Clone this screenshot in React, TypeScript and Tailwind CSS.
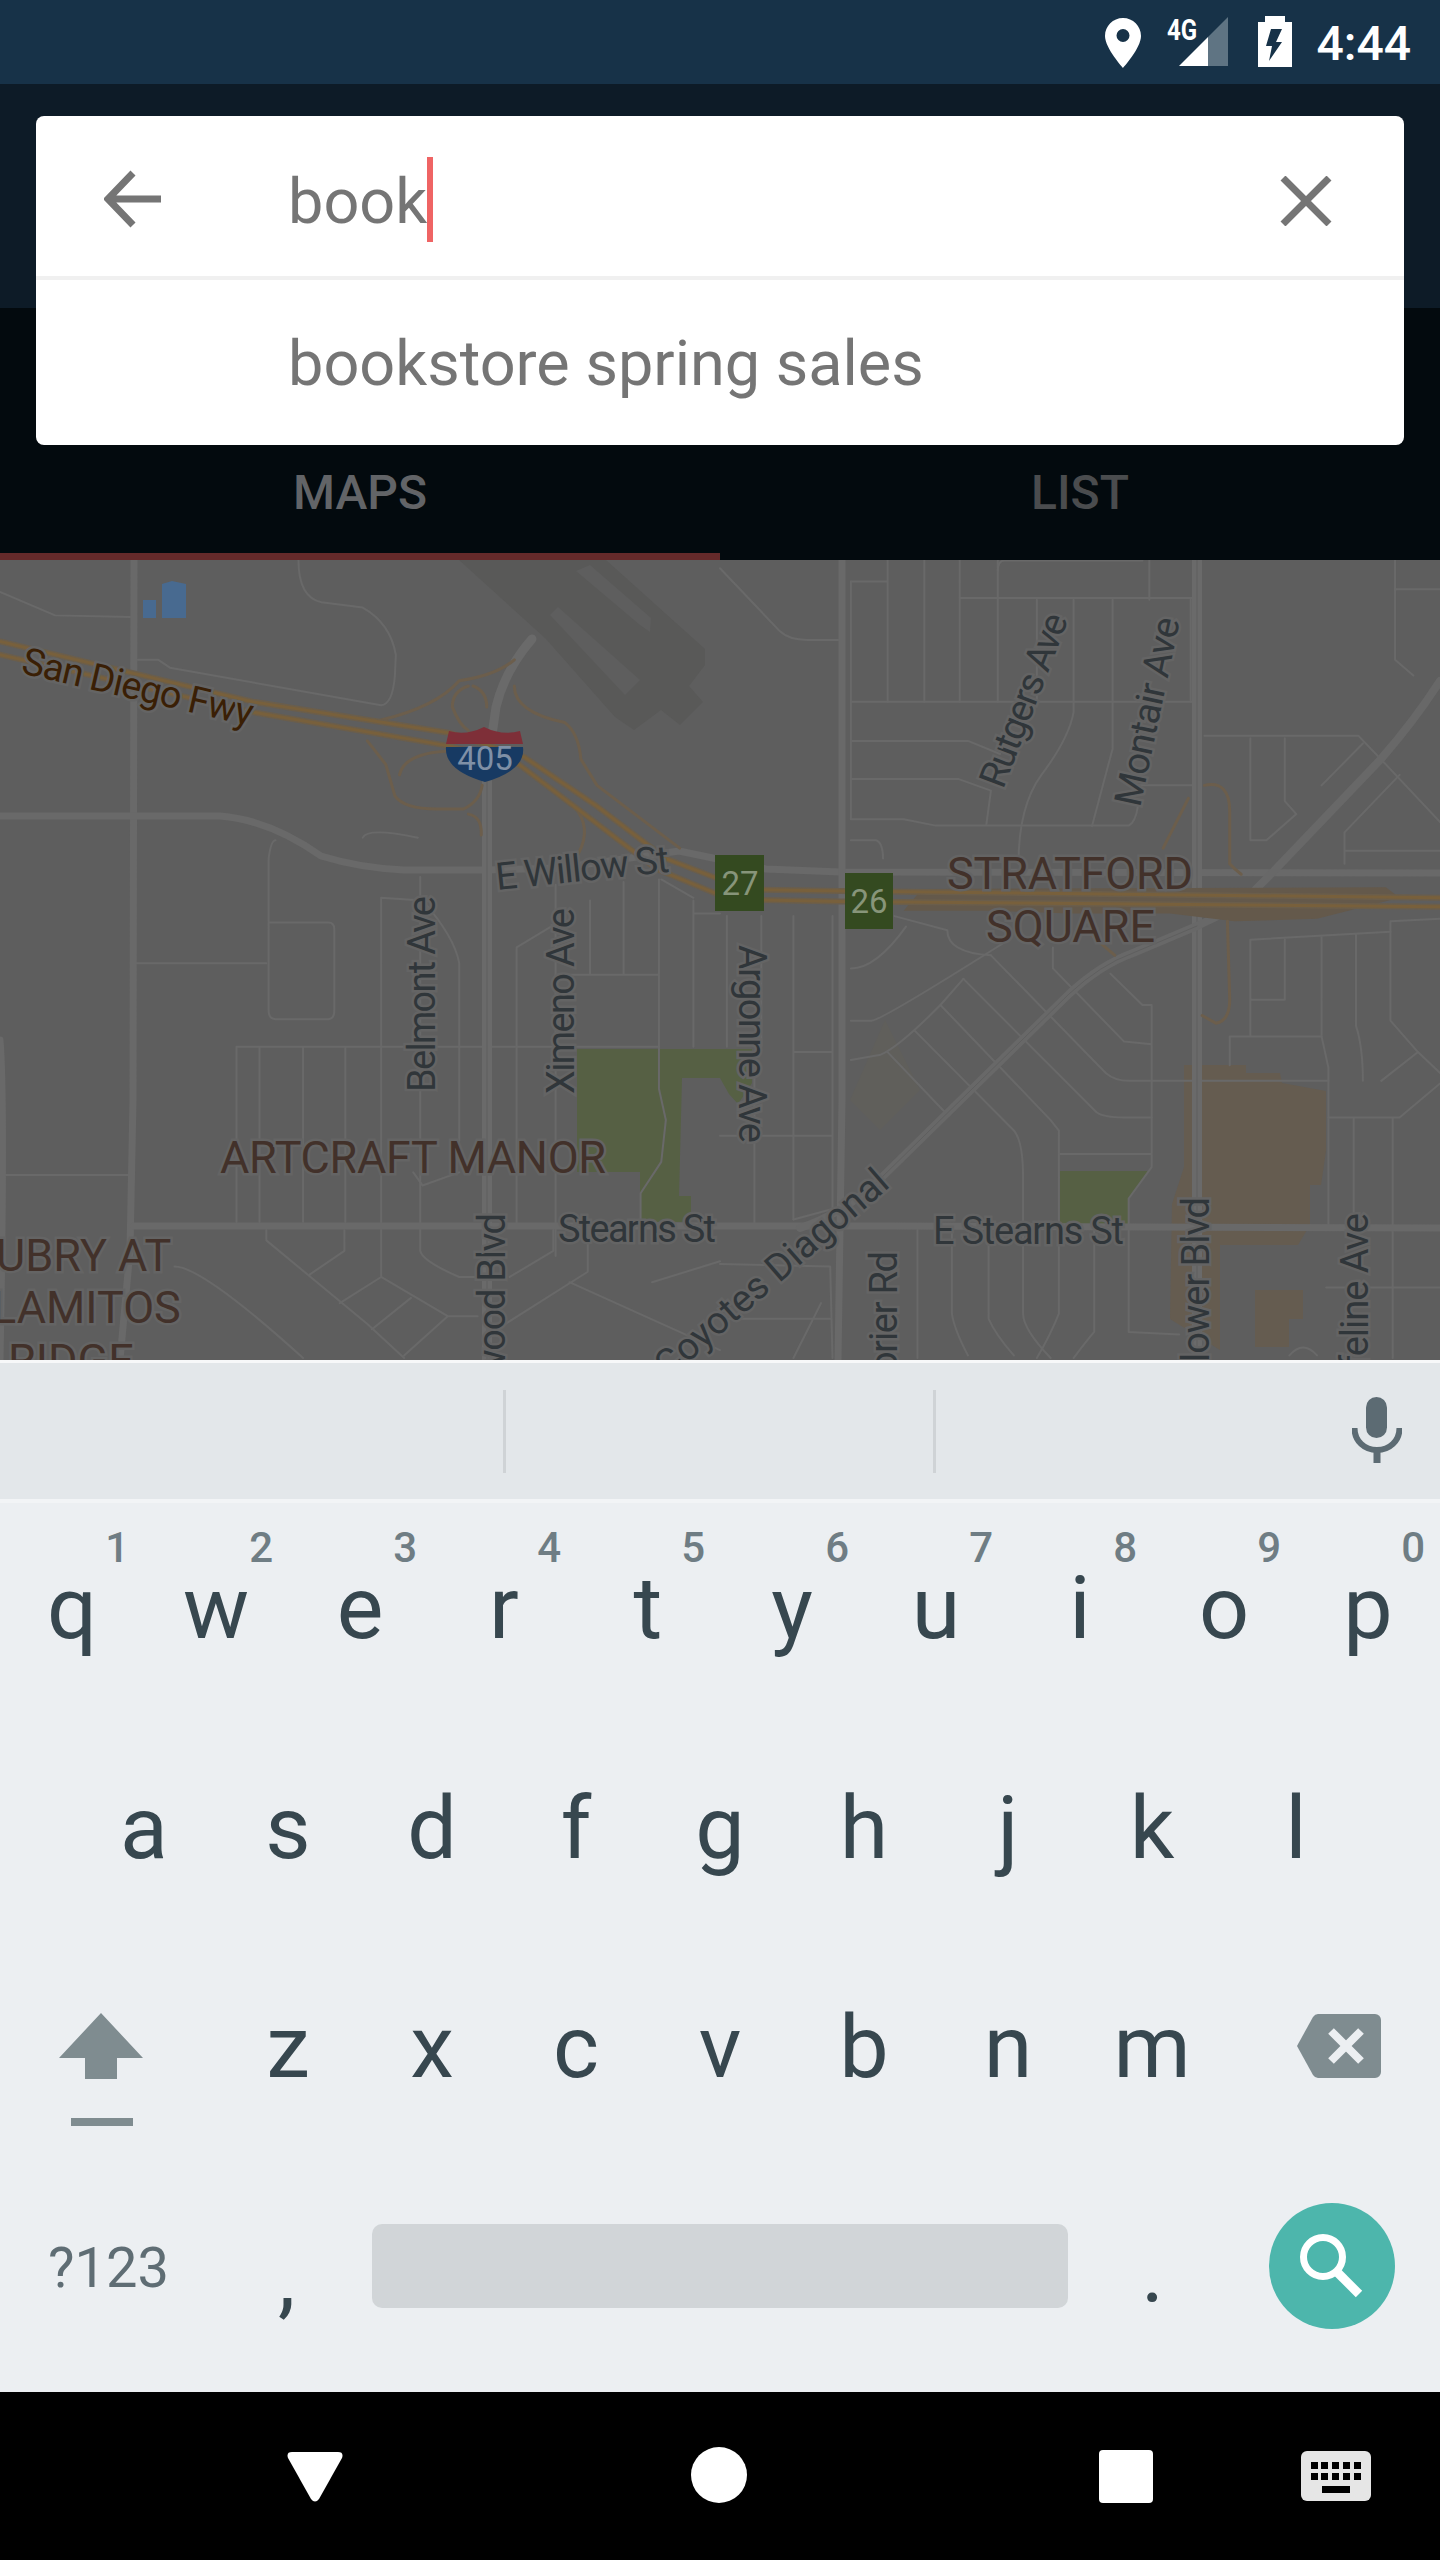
import React from "react";

const Lines = ({ ds, c, w }: { ds: string[]; c: string; w: number }) => (
  <>
    {ds.map((d, i) => (
      <path key={i} d={d} fill="none" stroke={c} strokeWidth={w} vectorEffect="non-scaling-stroke" strokeLinejoin="round" strokeLinecap="round" />
    ))}
  </>
);

const leftThin = [
  "M0 80 L120 125 L285 128",
  "M300 210 L345 210 L370 225 L830 297 Q855 295 860 240 L862 200 Q850 140 790 110 L700 100 Q650 90 650 20",
  "M298 790 L580 790",
  "M585 590 Q590 555 600 555 M585 590 L585 880 Q585 897 600 897 L715 897 Q728 897 728 880 L728 725 Q728 712 715 712 L585 712",
  "M915 625 L915 1340 Q920 1360 1000 1390 L1040 1390",
  "M830 665 L830 1390 M830 665 L920 670 Q990 740 1000 790 L1000 1130",
  "M515 950 L1435 950 M515 950 L515 1285 M565 950 L565 1285 M660 950 L660 1285 M752 950 L752 1285",
  "M1125 1290 L1125 760 L1210 715 M1210 640 L1210 1350",
  "M1285 670 L1285 812 M1358 635 L1358 812 M1210 812 L1435 812 M1435 630 L1435 1030 L1450 1090 L1440 1170 L1395 1230 L1395 1285 M1510 670 L1510 950 M1510 695 L1568 695 M1440 630 L1510 665",
  "M0 1195 L285 1195",
  "M580 1300 L580 1320 L800 1480 L880 1545 M750 1300 L750 1340 L675 1385",
  "M830 1390 L740 1440 M830 1390 L975 1465 L1040 1465 M895 1430 L810 1490 M975 1465 L880 1540",
  "M1110 1390 L1205 1340 L1205 1300 M1280 1300 L1280 1380 L1100 1480 M1240 1400 L1568 1530 M1420 1400 L1568 1360",
  "M380 1370 Q440 1370 660 1545 M900 1190 L920 1215 L1000 1190",
  "M790 550 Q800 530 910 550",
];

const rightThin = [
  "M0 35 L130 155 Q150 172 190 172 L262 172",
  "M285 60 L365 60 M365 20 L365 290 M445 20 L445 290 M522 20 L522 290 M605 20 L605 290 M690 95 L690 290",
  "M770 95 L770 310 Q760 360 700 430 Q650 490 650 600 M855 95 L855 380 L810 528 M935 20 L935 95 M1025 95 L1025 290 M522 92 L1030 92 M605 40 Q605 20 620 20 L920 20",
  "M285 290 L1030 290 M285 365 L540 365 L610 390 M285 438 L520 438 L590 460 L580 525",
  "M285 60 L285 515 L400 515 L470 527 L890 527 Q905 520 910 490 M910 450 L1030 450",
  "M285 555 L340 555 Q355 560 355 590",
  "M285 800 Q340 800 405 720 M380 700 L495 727 Q495 770 590 775",
  "M285 900 L330 900 Q350 900 620 750 M285 975 L350 965 Q390 950 480 870 L530 820",
  "M365 960 L490 1075 M590 775 L840 1000 Q860 1015 890 1015 L1325 1015 M530 820 L820 1075 Q835 1085 880 1085 L940 1085",
  "M480 870 L720 1090 L738 1110 L738 1460 Q720 1500 690 1545 M425 920 L640 1110 Q660 1130 660 1200 L660 1460 Q660 1490 720 1545",
  "M725 760 L725 800 L880 940 L940 945 M940 870 L940 1180 L890 1240 L890 1295 M850 810 L920 870 L940 870 M740 1155 L940 1155",
  "M160 700 L160 1280 M245 700 L245 1280 M160 960 L245 960 M90 700 L90 950 M15 700 L15 950 M75 1000 L75 1290 M0 1120 L245 1120",
  "M1155 360 L1155 555 L1190 555 L1255 505 L1230 480 L1230 360 M1055 355 L1390 355 L1450 410 L1568 520 M1400 370 L1310 450",
  "M1470 20 L1470 210 L1510 240 M1470 75 L1568 75 M1360 575 L1568 575 M1360 600 L1360 540 L1480 430",
  "M1155 745 L1155 930 M1155 745 L1460 730 M1230 745 L1230 860 L1155 860 M1310 740 L1310 930 L1110 930 L1110 985",
  "M1385 735 L1385 910 Q1400 950 1400 1015 M1460 710 L1460 900 L1520 960 L1440 1015 M1460 710 L1568 705 M1310 930 L1325 990 L1325 1290 M1520 960 L1568 1000",
  "M1380 1085 L1380 1290 M1465 1085 L1465 1290 M1325 1085 L1480 1085 L1568 1020",
  "M505 1300 L505 1460 Q510 1490 540 1540 M430 1300 L430 1545 M585 1300 L585 1470 Q600 1500 640 1540 M815 1300 L815 1495 Q800 1510 770 1545 M890 1300 L890 1495 L1000 1500",
  "M1320 1410 L1568 1410 M1465 1300 L1465 1545 M1240 1540 Q1270 1510 1300 1540 M0 1365 L240 1370 L245 1545 M160 1280 L245 1260",
  "M0 1470 L240 1470 M160 1545 L220 1440",
];

const rampsLeft = [
  "M830 325 Q950 300 1000 250 Q1080 240 1120 210",
  "M1020 260 Q985 270 985 300 Q1000 335 1020 345 M1030 260 Q1060 270 1060 300",
  "M800 365 L840 410 L860 470 Q880 495 950 495 L1010 495 Q1045 480 1050 450",
  "M1020 505 Q1050 510 1048 545",
  "M870 430 Q880 390 970 385",
  "M1120 260 Q1120 310 1230 330 Q1260 350 1265 400 L1300 450 L1480 570",
  "M1250 490 Q1290 530 1260 580",
];

const rampsRight = [
  "M1020 475 L965 570",
  "M1055 450 Q1110 440 1110 500 L1110 600 Q1120 610 1135 620",
  "M1105 710 L1110 860 Q1110 900 1080 905 L1050 890",
  "M800 730 L860 775",
];

const fwyL = ["M0 175 L550 290 L980 350 L1140 395 L1300 490 L1450 590 L1568 630", "M0 200 L550 310 L980 375 L1130 410 L1280 510 L1430 610 L1568 660"];
const fwyR = ["M0 648 L260 652 L1568 665", "M0 668 L260 672 L1568 682"];

function MapLayer() {
  const street = "#30363a";
  const hood = "#42312a";
  const labelClass = "[paint-order:stroke] stroke-[#646464] [stroke-width:5px]";
  return (
    <svg viewBox="0 560 1440 800" width="1440" height="800" className="block">
      <rect x="0" y="560" width="1440" height="800" fill="#5e5e5e" />

      {/* terminal block */}
      <polygon points="459,560 606,560 705,649 705,665 689,686 703,702 680,725 661,710 634,730 615,717 546,639" fill="#595958" />
      <polygon points="576,571 590,565 651,618 650,632 640,625" fill="#5e5e5e" />
      <polygon points="550,615 558,607 640,680 625,695" fill="#5e5e5e" />

      {/* parks + lots */}
      <polygon points="577,1049 752,1049 752,1083 738,1104 729,1094 720,1078 682,1078 679,1196 691,1196 691,1222 640,1222 640,1172 577,1172" fill="#566044" />
      <polygon points="1060,1171 1149,1171 1129,1198 1129,1227 1060,1227" fill="#566044" />
      <polygon points="1184,1065 1246,1065 1246,1073 1280,1073 1282,1083 1326,1091 1326,1151 1321,1185 1310,1185 1310,1225 1298,1245 1220,1245 1220,1350 1170,1319 1172,1204 1184,1167" fill="#655c50" />
      <polygon points="1255,1290 1303,1290 1303,1319 1289,1319 1289,1347 1255,1347" fill="#655c50" />
      <polygon points="143,600 156,600 156,618 143,618" fill="#486a90" />
      <polygon points="162,584 172,581 186,584 186,618 162,618" fill="#486a90" />
      <polygon points="885,1020 920,1090 880,1130 850,1100" fill="#605f5b" />

      <g transform="translate(0 550) scale(0.4592 0.523)">
        <Lines ds={leftThin} c="#696969" w={2} />
      </g>
      <g transform="translate(720 550) scale(0.4592 0.523)">
        <Lines ds={rightThin} c="#696969" w={2} />
      </g>

      {/* arterial roads */}
      <Lines
        c="#696969"
        w={7}
        ds={[
          "M134 560 L133 1100 L130 1250 L120 1360",
          "M0 816 L220 816 Q270 820 321 856 Q360 868 404 870 L487 870 L560 868 L679 851 L766 869 L840 872 L1440 873",
          "M842 560 L842 1100 L838 1360",
          "M134 1226 L720 1226 L890 1226 L1440 1228",
          "M0 1040 Q5 1100 0 1360",
        ]}
      />
      <Lines c="#6a6a6a" w={10} ds={["M1197 560 L1197 1360", "M487 770 L487 1360"]} />
      <Lines c="#6a6a6a" w={9} ds={["M532 639 Q505 670 496 707 L487 770"]} />
      <Lines c="#5f5f5f" w={1} ds={["M487 770 L487 1360", "M1197 560 L1197 1360"]} />
      <Lines c="#686868" w={8} ds={["M876 1183 L1069 994 Q1100 965 1133 953 L1197 926 L1239 906 L1271 874 L1381 759 Q1415 720 1440 681", "M876 1183 Q840 1215 800 1228"]} />
      <Lines c="#5f5f5f" w={1} ds={["M876 1183 L1069 994 Q1100 965 1133 953 L1197 926"]} />

      {/* freeway */}
      <g transform="translate(720 550) scale(0.4592 0.523)">
        <polygon points="440,648 1450,645 1480,665 1300,705 1120,710 980,695 760,695 600,690 400,690" fill="#64594b" />
      </g>
      <g transform="translate(0 550) scale(0.4592 0.523)">
        <Lines ds={rampsLeft} c="#6c5e4c" w={3} />
        <Lines ds={fwyL} c="#6b5e4b" w={6} />
        <Lines ds={fwyL} c="#78603c" w={3} />
      </g>
      <g transform="translate(720 550) scale(0.4592 0.523)">
        <Lines ds={rampsRight} c="#6c5e4c" w={3} />
        <Lines ds={fwyR} c="#6b5e4b" w={6} />
        <Lines ds={fwyR} c="#78603c" w={3} />
      </g>

      {/* shields */}
      <path d="M449 731 Q466 736 484 727 Q502 736 520 731 L523 744 L446 744 Z" fill="#7e2f38" />
      <path d="M446 747 L523 747 Q526 770 485 782 Q444 770 446 747 Z" fill="#173a63" />
      <text x="485" y="770" textAnchor="middle" fontSize="33" fill="#7f90a6">405</text>

      <rect x="715" y="855" width="49" height="56" fill="#344a20" />
      <text x="740" y="895" textAnchor="middle" fontSize="33" fill="#87957a">27</text>
      <rect x="845" y="873" width="48" height="56" fill="#344a20" />
      <text x="869" y="913" textAnchor="middle" fontSize="33" fill="#87957a">26</text>

      {/* labels */}
      <text transform="translate(20 673) rotate(13)" fontSize="38" fill="#3a1f05" textLength="236" className={labelClass}>San Diego Fwy</text>
      <text transform="translate(497 890) rotate(-6)" fontSize="38" fill={street} textLength="174" className={labelClass}>E Willow St</text>
      <text transform="translate(435 1092) rotate(-90)" fontSize="38" fill={street} textLength="196" className={labelClass}>Belmont Ave</text>
      <text transform="translate(574 1094) rotate(-90)" fontSize="38" fill={street} textLength="186" className={labelClass}>Ximeno Ave</text>
      <text x="220" y="1173" fontSize="45" fill={hood} textLength="386" className={labelClass}>ARTCRAFT MANOR</text>
      <text x="558" y="1242" fontSize="38" fill={street} textLength="158" className={labelClass}>Stearns St</text>
      <text x="-4" y="1271" fontSize="45" fill={hood} className={labelClass}>UBRY AT</text>
      <text x="-8" y="1323" fontSize="45" fill={hood} className={labelClass}>LAMITOS</text>
      <text x="8" y="1376" fontSize="45" fill={hood} className={labelClass}>RIDGE</text>
      <text transform="translate(505 1378) rotate(-90)" fontSize="38" fill={street} textLength="165" className={labelClass}>wood Blvd</text>
      <text transform="translate(668 1380) rotate(-41)" fontSize="38" fill={street} className={labelClass}>Coyotes Diagonal</text>
      <text transform="translate(897 1373) rotate(-90)" fontSize="38" fill={street} textLength="122" className={labelClass}>orier Rd</text>
      <text transform="translate(1003 790) rotate(-69)" fontSize="38" fill={street} textLength="183" className={labelClass}>Rutgers Ave</text>
      <text transform="translate(1140 808) rotate(-78)" fontSize="38" fill={street} textLength="192" className={labelClass}>Montair Ave</text>
      <text x="947" y="889" fontSize="45" fill={hood} textLength="246" className={labelClass}>STRATFORD</text>
      <text x="986" y="942" fontSize="45" fill={hood} textLength="169" className={labelClass}>SQUARE</text>
      <text transform="translate(739 945) rotate(90)" fontSize="38" fill={street} textLength="198" className={labelClass}>Argonne Ave</text>
      <text x="933" y="1244" fontSize="38" fill={street} textLength="191" className={labelClass}>E Stearns St</text>
      <text transform="translate(1209 1362) rotate(-90)" fontSize="38" fill={street} textLength="165" className={labelClass}>lower Blvd</text>
      <text transform="translate(1368 1368) rotate(-90)" fontSize="38" fill={street} textLength="155" className={labelClass}>feline Ave</text>
    </svg>
  );
}

const Key = ({ ch, digit, pt, w = "w-[144px]" }: { ch: string; digit?: string; pt: string; w?: string }) => (
  <div className={`relative h-full ${w} text-center ${pt}`}>
    {digit && <span className="absolute top-[24px] right-[15px] text-[42px] leading-[42px] font-medium text-[#6f7d84]">{digit}</span>}
    <span className="block text-[88px] leading-[100px] text-[#37474f]">{ch}</span>
  </div>
);

export default function App() {
  const row1 = [["q", "1"], ["w", "2"], ["e", "3"], ["r", "4"], ["t", "5"], ["y", "6"], ["u", "7"], ["i", "8"], ["o", "9"], ["p", "0"]];
  return (
    <div className="relative flex h-[2560px] w-[1440px] flex-col overflow-hidden bg-black font-['Roboto',sans-serif]">
      {/* status bar */}
      <div className="relative h-[84px] shrink-0 bg-[#173248]">
        <div className="flex h-full items-start justify-end pr-[29px] text-white">
          <svg width="36" height="50" viewBox="0 0 36 50" className="mt-[18px]">
            <path fillRule="evenodd" d="M18 0C8 0 0 8 0 18c0 12 18 32 18 32s18-20 18-32C36 8 28 0 18 0Zm0 11a6.500 6.500 0 1 1 0 13 6.500 6.500 0 0 1 0-13Z" fill="#fff" />
          </svg>
          <div className="relative ml-[26px] mt-[15px] h-[52px] w-[61px]">
            <span className="absolute left-0 top-0 origin-left scale-x-[0.8] text-[30px] leading-[30px] font-bold">4G</span>
            <svg width="61" height="52" viewBox="0 0 61 52" className="absolute inset-0">
              <polygon points="12,51 41,22 41,51" fill="#fff" />
              <polygon points="41,22 61,2 61,51 41,51" fill="#5f7483" />
            </svg>
          </div>
          <svg width="34" height="51" viewBox="0 0 34 51" className="ml-[30px] mt-[16px]">
            <path d="M7 0h20v6h7v45H0V6h7Z" fill="#fff" />
            <polygon points="13,13 24,13 18,26 24,26 11,45 14,30 8,30" fill="#173248" />
          </svg>
          <span className="ml-[25px] mt-[16px] text-[48px] leading-[56px] font-medium">4:44</span>
        </div>
      </div>

      {/* app bar */}
      <div className="h-[224px] shrink-0 bg-[#0d1b27]" />

      {/* tabs */}
      <div className="flex h-[252px] shrink-0 flex-col bg-[#030a0e]">
        <div className="flex flex-1">
          <div className="w-[720px] pt-[157px] text-center text-[48px] leading-[56px] font-medium text-[#626467]">MAPS</div>
          <div className="w-[720px] pt-[157px] text-center text-[48px] leading-[56px] font-medium text-[#4a4c4e]">LIST</div>
        </div>
        <div className="h-[7px] w-[720px] bg-[#652a2a]" />
      </div>

      {/* search card */}
      <div className="absolute left-[36px] top-[116px] w-[1368px] overflow-hidden rounded-[8px] bg-white text-[#757575]">
        <div className="relative flex h-[160px] items-start">
          <svg width="60" height="58" viewBox="0 0 60 58" className="absolute left-[68px] top-[54px]">
            <path d="M57 29H6M29 3 4 29l25 26" fill="none" stroke="#757575" strokeWidth="7" />
          </svg>
          <div className="ml-[252px] mt-[41px] flex items-start">
            <span className="mt-[9px] text-[63px] leading-[72px]">book</span>
            <span className="h-[85px] w-[6px] bg-[#ef6464]" />
          </div>
          <svg width="52" height="50" viewBox="0 0 52 50" className="absolute left-[1244px] top-[60px]">
            <path d="M3 2l46 46M49 2 3 48" fill="none" stroke="#757575" strokeWidth="7" />
          </svg>
        </div>
        <div className="h-[4px] bg-[#f0f0f0]" />
        <div className="h-[165px] pl-[252px] pt-[48px] text-[63px] leading-[72px]">bookstore spring sales</div>
      </div>

      {/* map */}
      <div className="h-[800px] shrink-0 overflow-hidden bg-[#5e5e5e]">
        <MapLayer />
      </div>

      {/* keyboard */}
      <div className="h-[3px] shrink-0 bg-[#f7f8f9]" />
      <div className="relative flex h-[136px] shrink-0 items-center bg-[#e3e7ea]">
        <div className="ml-[503px] h-[83px] w-[3px] bg-[#cfd3d6]" />
        <div className="ml-[427px] h-[83px] w-[3px] bg-[#cfd3d6]" />
        <svg width="50" height="67" viewBox="0 0 50 67" className="ml-[416px] -mt-[2px]">
          <rect x="14" y="0" width="21" height="41" rx="10.500" fill="#5c6b73" />
          <path d="M2.500 31c0 13 10 22 22.500 22s22.500-9 22.500-22" fill="none" stroke="#5c6b73" strokeWidth="6" />
          <rect x="21.500" y="54" width="7" height="12" fill="#5c6b73" />
        </svg>
      </div>
      <div className="h-[4px] shrink-0 bg-[#f2f4f6]" />
      <div className="flex h-[889px] shrink-0 flex-col bg-[#eceff2]">
        <div className="flex h-[219px]">
          {row1.map(([c, d]) => (
            <Key key={c} ch={c} digit={d} pt="pt-[55px]" />
          ))}
        </div>
        <div className="flex h-[220px] pl-[72px]">
          {"asdfghjkl".split("").map((c) => (
            <Key key={c} ch={c} pt="pt-[56px]" />
          ))}
        </div>
        <div className="flex h-[198px]">
          <div className="relative h-full w-[216px]">
            <svg width="84" height="114" viewBox="0 0 84 114" className="absolute left-[59px] top-[71px]">
              <polygon points="42,0 84,45 58,45 58,66 26,66 26,45 0,45" fill="#7f8c90" />
              <rect x="12" y="105" width="62" height="8" fill="#7f8c90" />
            </svg>
          </div>
          {"zxcvbnm".split("").map((c) => (
            <Key key={c} ch={c} pt="pt-[55px]" />
          ))}
          <div className="relative h-full w-[216px]">
            <svg width="84" height="64" viewBox="0 0 84 64" className="absolute left-[73px] top-[72px]">
              <path d="M21 0H78a6 6 0 0 1 6 6V58a6 6 0 0 1-6 6H21Q18 64 16 61L0 32 16 3Q18 0 21 0Z" fill="#7f8c90" />
              <path d="M34 17 64 47M64 17 34 47" fill="none" stroke="#eceff2" strokeWidth="8" />
            </svg>
          </div>
        </div>
        <div className="relative flex h-[252px] items-center">
          <div className="w-[216px] pl-[48px] pt-[3px] text-[56px] leading-[64px] text-[#5f6d74]">?123</div>
          <div className="w-[156px] pl-[62px] pt-[22px] text-[88px] leading-[100px] text-[#37474f]">,</div>
          <div className="h-[84px] w-[696px] rounded-[10px] bg-[#d1d5d8]" />
          <div className="w-[144px] pl-[73px] pt-[10px] text-[88px] leading-[100px] text-[#37474f]">.</div>
          <div className="ml-[57px] flex h-[126px] w-[126px] items-center justify-center rounded-full bg-[#4db6ac]">
            <svg width="70" height="70" viewBox="0 0 70 70">
              <circle cx="26" cy="26" r="19.500" fill="none" stroke="#fff" strokeWidth="7" />
              <path d="M41 42 62 63" stroke="#fff" strokeWidth="9" />
            </svg>
          </div>
        </div>
      </div>

      {/* nav */}
      <div className="relative flex flex-1 items-start bg-black">
        <svg width="58" height="52" viewBox="0 0 58 52" className="ml-[286px] mt-[59px]">
          <path d="M6 1H52Q58 1 56 7L33 48Q29 53 25 48L2 7Q0 1 6 1Z" fill="#fff" />
        </svg>
        <div className="ml-[347px] mt-[55px] h-[56px] w-[56px] rounded-full bg-white" />
        <div className="ml-[352px] mt-[58px] h-[53px] w-[54px] rounded-[4px] bg-white" />
        <svg width="70" height="50" viewBox="0 0 70 50" className="ml-[148px] mt-[59px]">
          <rect width="70" height="50" rx="6" fill="#e6e6e6" />
          <g fill="#000">
            <rect x="10" y="11" width="7" height="7" /><rect x="20" y="11" width="7" height="7" /><rect x="31" y="11" width="7" height="7" /><rect x="42" y="11" width="7" height="7" /><rect x="53" y="11" width="7" height="7" />
            <rect x="10" y="22" width="7" height="7" /><rect x="20" y="22" width="7" height="7" /><rect x="31" y="22" width="7" height="7" /><rect x="42" y="22" width="7" height="7" /><rect x="53" y="22" width="7" height="7" />
            <rect x="21" y="35" width="28" height="7" />
          </g>
        </svg>
      </div>
    </div>
  );
}
